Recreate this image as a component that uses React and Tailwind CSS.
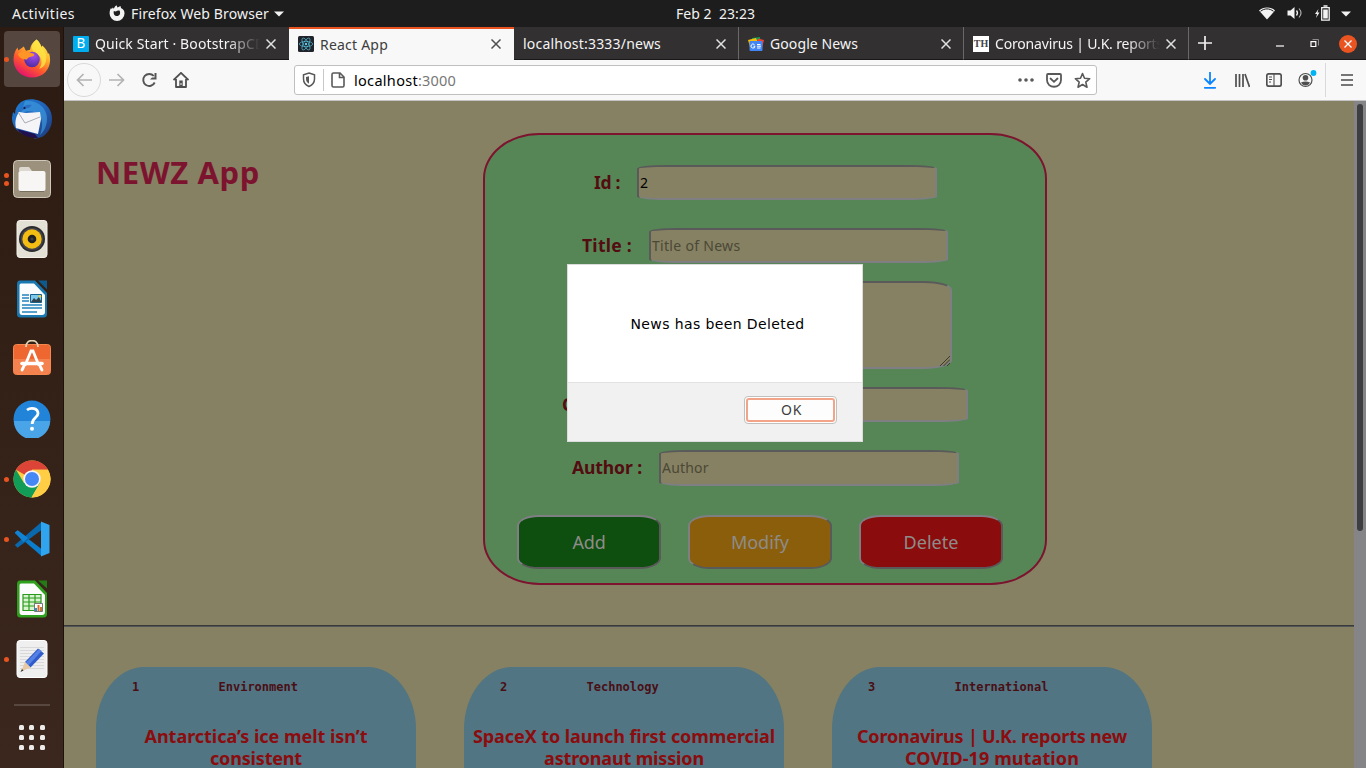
import { useLayoutEffect, useRef, useState } from "react";

/* Spreads a run of text over a fixed measure by adjusting its tracking. */
function Fit({ w, children, className = "" }) {
  const ref = useRef(null);
  const [tracking, setTracking] = useState(0);
  useLayoutEffect(() => {
    const natural = ref.current.getBoundingClientRect().width;
    setTracking((w - natural) / children.length);
  }, []);
  return (
    <span ref={ref} className={`inline-block whitespace-pre ${className}`} style={{ letterSpacing: `${tracking}px` }}>
      {children}
    </span>
  );
}

/* ---------- Dock icons ---------- */

const FirefoxIcon = () => (
  <svg width="40" height="40" viewBox="0 0 40 40">
    <defs>
      <linearGradient id="ffBody" x1="0.85" y1="0.05" x2="0.3" y2="1">
        <stop offset="0" stopColor="#fff44f" />
        <stop offset="0.35" stopColor="#ffb22e" />
        <stop offset="0.65" stopColor="#ff5a2c" />
        <stop offset="1" stopColor="#e4106f" />
      </linearGradient>
      <radialGradient id="ffGlobe" cx="0.6" cy="0.25" r="0.8">
        <stop offset="0" stopColor="#a24df0" />
        <stop offset="1" stopColor="#4b2a9c" />
      </radialGradient>
    </defs>
    <path d="M24.500 .500c2.500 2 4 4.500 4.800 7.500l1-1.500c3 2.500 5 5 5.700 8.500l1-1C41 26 34 38.500 20 38.500 9 38.500 1.500 30.500 1.500 20.500c0-4.500 1.500-9 4-12l.8 3 2-1.500 3.500-2.500 2.200 4.500c1.200-.8 2.500-1.200 4-1.300C18.500 6 21 3 24.500.5Z" fill="url(#ffBody)" />
    <path d="M24.500.5c2.500 2 4 4.500 4.800 7.500C33 12 35 16 34 22c-1 5-4 7-7 8 4-5 3-11-1-14.500-4-3-7-4.500-6-8C20.500 5 22.500 2 24.500.5Z" fill="#ffe645" opacity=".8" />
    <circle cx="20" cy="20.500" r="7.800" fill="url(#ffGlobe)" />
    <path d="M6 15c3-3 6-3.500 9-3 2 .3 3 2 6 2.500 2 .5 1.500 2.500-1 3-3 .5-4 1-5 3-3 0-8-1-9-5.500Z" fill="#ff9427" />
  </svg>
);

const ThunderbirdIcon = () => (
  <svg width="42" height="42" viewBox="0 0 42 42">
    <defs>
      <linearGradient id="tbBody" x1="0" y1="0" x2="1" y2="1">
        <stop offset="0" stopColor="#1f7fd3" />
        <stop offset="0.5" stopColor="#2162b8" />
        <stop offset="1" stopColor="#1d3777" />
      </linearGradient>
    </defs>
    <path d="M10 4C14 1 22 0 29 3c7 3 12 9 12 18 0 9-5 15-10 18l-8 2 2-3-13-2C5 33 1 27 1 20l1-6 2 2C4 11 6 7 10 4Z" fill="url(#tbBody)" />
    <path d="M14 3c8-1 18 3 21 12 3 8-1 18-6 22 3-8 3-16-1-20-4-4-11-5-18-2Z" fill="#3f9be0" opacity=".65" />
    <path d="m8 14 7 1 14-1 1 7-3 15-22-6C4 25 4 20 8 14Z" fill="#f5f5f7" />
    <path d="m7 14 7 11 15-6" stroke="#a9acb3" fill="none" />
    <path d="M10 11c3-4 7-5 11-4l-3 3c-3 0-5 2-10 4Z" fill="#2b6ec4" />
    <path d="m6 31 18 5 3 4c-8 0-16-2-21-9Z" fill="#211050" />
    <circle cx="13.500" cy="10" r="1.100" fill="#0f1c40" />
  </svg>
);

const FilesIcon = () => (
  <svg width="38" height="38" viewBox="0 0 38 38">
    <rect x=".5" y=".5" width="37" height="37" rx="4" fill="#9c917d" stroke="#cfc8ba" />
    <path d="M6 9q0-2 2-2h8l3 4H6Z" fill="#dcd8cf" />
    <rect x="5.500" y="11" width="27" height="20" rx="2" fill="#f7f6f4" />
    <path d="M7 31.500h24" stroke="#786e5e" />
  </svg>
);

const RhythmboxIcon = () => (
  <svg width="32" height="38" viewBox="0 0 32 38">
    <rect x="1" y=".5" width="30" height="37" rx="3" fill="#e3e0d6" stroke="#f3f1e9" />
    <circle cx="16" cy="19" r="13" fill="#2b2b2e" />
    <circle cx="16" cy="19" r="11.300" fill="#44444a" />
    <circle cx="16" cy="19" r="9.700" fill="#f3bd13" />
    <circle cx="16" cy="19" r="4.300" fill="#202023" />
    <circle cx="16" cy="19" r="1.600" fill="#3c3c45" />
  </svg>
);

const WriterIcon = () => (
  <svg width="32" height="38" viewBox="0 0 32 38">
    <path d="M4 .5h15L31 13v21q0 3.500-3.500 3.500h-23Q1 37.500 1 34V4Q1 .5 4 .5Z" fill="#1a78b0" />
    <path d="M22 .5h9v9Z" fill="#0d5a8c" />
    <path d="M5 3.500h13L29 15v17q0 3-3 3H6q-2.500 0-2.500-3V5.500q0-2 1.500-2Z" fill="#fbfcfd" />
    <path d="M6 15h7M6 18h7M6 21h7M6 25h20M6 28h20M6 32h15" stroke="#2383bd" strokeWidth="1.500" />
    <path d="M14.500 14.500h11v8h-11z" fill="#7ecaec" stroke="#18618e" />
    <path d="m15 22 3-4 2 2 3-3 2.500 5Z" fill="#31424c" />
    <circle cx="24" cy="16.300" r="1.200" fill="#f6d12b" />
  </svg>
);

const SoftwareIcon = () => (
  <svg width="38" height="38" viewBox="0 0 38 38">
    <rect x=".5" y="4.500" width="37" height="30" rx="3" fill="#ee6630" stroke="#f5874f" />
    <path d="M1 19h36v13q0 2-2 2H3q-2 0-2-2Z" fill="#f4824e" />
    <path d="M13 7C13-1.500 25-1.500 25 7" fill="none" stroke="#e6d5b4" strokeWidth="1.800" />
    <path d="m12.500 24.500 5.500-13.500h2l5.500 13.500M11 26l-2 4M27 26l2 4" stroke="#fff" strokeWidth="2.800" fill="none" strokeLinecap="round" />
    <path d="M9 23.500h20" stroke="#fff" strokeWidth="3.600" strokeLinecap="round" />
  </svg>
);

const HelpIcon = () => (
  <svg width="38" height="38" viewBox="0 0 38 38">
    <circle cx="19" cy="19" r="18.500" fill="#2184d8" />
    <path d="M1 21h36A18 18 0 0 1 1 21Z" fill="#4aa5e8" />
    <path d="M14 10c4-3 11-2 11 3.500 0 4-5.800 4.500-5.800 10.500" stroke="#fff" strokeWidth="2.800" fill="none" />
    <circle cx="19" cy="28.800" r="2" fill="#fff" />
  </svg>
);

const ChromeIcon = () => (
  <svg width="38" height="38" viewBox="0 0 38 38">
    <circle cx="19" cy="19" r="18.500" fill="#ffce44" />
    <path d="M19 19 3 9.700A18.500 18.500 0 0 1 35 9.700H19Z" fill="#dc4437" />
    <path d="M3 9.700A18.500 18.500 0 0 0 18.500 37.500L27 23 19 19 11 23Z" fill="#119d58" />
    <path d="M19 9.700h16A18.500 18.500 0 0 1 18.500 37.500L27.500 22Z" fill="#ffce44" />
    <circle cx="19" cy="19" r="8.700" fill="#f5f5f5" />
    <circle cx="19" cy="19" r="7" fill="#4587f4" />
  </svg>
);

const CodeIcon = () => (
  <svg width="36" height="36" viewBox="0 0 36 36">
    <path d="m3.500 9.500 24 18.500v7L.8 12Z" fill="#0a7dcc" />
    <path d="m.8 24 26.700-23v8L3.500 26.800Z" fill="#0a68ad" />
    <path d="m.8 11.500 3-2.300L14 17l-4.500 4Z" fill="#1183d2" />
    <path d="M27 .5 35.500 4v28L27 35.500Z" fill="#30a4ee" />
  </svg>
);

const CalcIcon = () => (
  <svg width="32" height="38" viewBox="0 0 32 38">
    <path d="M4 .5h15L31 13v21q0 3.500-3.500 3.500h-23Q1 37.500 1 34V4Q1 .5 4 .5Z" fill="#2ea01d" />
    <path d="M22 .5h9v8Z" fill="#237a16" />
    <path d="M5 3.500h13L29 15v17q0 3-3 3H6q-2.500 0-2.500-3V5.500q0-2 1.500-2Z" fill="#fbfcfb" />
    <path d="M7 14h18v17H7z" fill="#d6f4cf" />
    <path d="M7 14.500h18v16H7zM7 18h18M7 22h18M7 26h18M13 14v16M19 14v16" stroke="#2a9a1b" fill="none" strokeWidth="1.200" />
    <path d="M18.500 23.500h8v8h-8z" fill="#fff" stroke="#777" />
    <path d="M19 28h2v3h-2z" fill="#2491d6" />
    <path d="M21.500 25h2v6h-2z" fill="#e46724" />
    <path d="M24 27h2v4h-2z" fill="#be7d34" />
  </svg>
);

const EditorIcon = () => (
  <svg width="32" height="38" viewBox="0 0 32 38">
    <rect x="1" y=".5" width="30" height="37" rx="3" fill="#efefef" stroke="#fff" />
    <path d="M4 7.500h24M4 10.500h24M4 13.500h24M4 16.500h24M4 19.500h24M4 22.500h24M4 25.500h24M4 28.500h24" stroke="#d9d9d9" />
    <path d="m9 22 13-13.500 6 5L14.500 27.500Z" fill="#2f5ccc" />
    <path d="m10 22.500 13-13.500 2.500 2-13 14.500Z" fill="#5580e4" />
    <path d="m9 22 5.500 5.500-9.500 4Z" fill="#e8c9a4" />
    <path d="m6 29 1.500 1.500L4.500 32Z" fill="#333" />
  </svg>
);

const dockItems = [
  { Icon: FirefoxIcon, dots: 1, active: true },
  { Icon: ThunderbirdIcon, dots: 0 },
  { Icon: FilesIcon, dots: 2 },
  { Icon: RhythmboxIcon, dots: 0 },
  { Icon: WriterIcon, dots: 0 },
  { Icon: SoftwareIcon, dots: 0 },
  { Icon: HelpIcon, dots: 0 },
  { Icon: ChromeIcon, dots: 1 },
  { Icon: CodeIcon, dots: 1 },
  { Icon: CalcIcon, dots: 0 },
  { Icon: EditorIcon, dots: 1 },
];

function Dock() {
  return (
    <nav className="flex w-16 shrink-0 flex-col border-r border-[#1d130e] bg-linear-to-b from-[#2c1b12] to-[#3b271d] pt-0.5">
      {dockItems.map(({ Icon, dots, active }, i) => (
        <div key={i} className="relative flex h-[60px] items-center pl-1">
          <div className={active ? "flex h-14 w-14 items-center justify-center rounded bg-[#554640]" : "flex h-14 w-14 items-center justify-center"}>
            <Icon />
          </div>
          <div className="absolute left-1 flex flex-col gap-[3px]">
            {Array.from({ length: dots }, (_, d) => (
              <i key={d} className="h-[5px] w-[5px] rounded-full bg-[#e95420]" />
            ))}
          </div>
        </div>
      ))}
      <div className="mx-auto mt-[15px] h-0.5 w-9 bg-[#57473e]" />
      <div className="mt-[19px] ml-[19px] grid w-[26px] grid-cols-3 gap-[5px]">
        {Array.from({ length: 9 }, (_, i) => (
          <i key={i} className="h-[5px] w-[5px] rounded-[1.500px] bg-[#eeecea]" />
        ))}
      </div>
    </nav>
  );
}

/* ---------- System bar ---------- */

function TopBar() {
  return (
    <header className="flex h-[27px] shrink-0 items-center bg-[#1d1d1d] text-[14px] text-[#f2f2f2]">
      <div className="flex w-[676px] items-center pl-3">
        <Fit w={63}>Activities</Fit>
        <svg className="-mt-px ml-[34px]" width="16" height="16" viewBox="0 0 16 16">
          <path d="M7.500.3 8.500 2.500l3-1.500.5 2c3 1.500 3.500 3.500 3.500 5.500A7.400 7.400 0 0 1 .6 8.500c0-2 .4-4 1.400-5.500l.8 1 1-1.500 1 1.200C5.500 2.500 6 1 7.500.3ZM10.500 5.500c-2 0-3 .5-4 1L4.800 6c-.6 3 .8 5 3.200 5 2.500 0 4-2.500 2.500-5.500Z" fill="#f2f2f2" fillRule="evenodd" />
        </svg>
        <Fit w={138} className="ml-1.5">Firefox Web Browser</Fit>
        <svg className="ml-[5px]" width="10" height="6" viewBox="0 0 10 6"><path d="M0 .5h10L5 5.500Z" fill="#f2f2f2" /></svg>
      </div>
      <Fit w={79} className="-mt-px">{"Feb 2  23:23"}</Fit>
      <div className="ml-auto flex items-center pr-[15px]">
        <svg width="16" height="13" viewBox="0 0 16 13">
          <path d="M0 3.500C4-.5 12-.5 16 3.500L8 12.500Z" fill="#f2f2f2" />
          <path d="M1.500 4.300c4-3.200 9-3.200 13 0" stroke="#1d1d1d" fill="none" />
        </svg>
        <svg className="ml-3 -mt-px" width="16" height="14" viewBox="0 0 16 14">
          <path d="M.5 4.500h3L7.500 1v12L3.500 9.500h-3Z" fill="#f2f2f2" />
          <path d="M9.500 4.500q2 2.500 0 5" stroke="#f2f2f2" strokeWidth="1.300" fill="none" />
          <path d="M12 2.500q4 4.500 0 9" stroke="#b5b5b5" strokeWidth="1.100" fill="none" />
        </svg>
        <svg className="-mt-0.5 ml-3" width="15" height="16" viewBox="0 0 15 16">
          <path d="M3.500 4 0 9h2l-1 4 3.500-5.500h-2Z" fill="#f2f2f2" />
          <path d="M6.700 2.700h7.500v12.500H6.700ZM8.500 1h4" fill="none" stroke="#f2f2f2" strokeWidth="1.300" />
          <path d="M8.200 4.500h4.600v9H8.200z" fill="#f2f2f2" />
        </svg>
        <svg className="ml-[11px]" width="10" height="6" viewBox="0 0 10 6"><path d="M0 .5h10L5 5.500Z" fill="#f2f2f2" /></svg>
      </div>
    </header>
  );
}

/* ---------- Browser chrome ---------- */

const Close = ({ color }) => (
  <svg className="shrink-0" width="10" height="10" viewBox="0 0 10 10">
    <path d="m.5.5 9 9m0-9-9 9" stroke={color} strokeWidth="1.500" />
  </svg>
);

const ReactFavicon = () => (
  <svg width="16" height="16" viewBox="0 0 16 16">
    <rect width="16" height="16" rx="1.500" fill="#20232a" />
    <g fill="none" stroke="#5ccfee" strokeWidth=".6">
      <ellipse cx="8" cy="8" rx="6.700" ry="2.600" />
      <ellipse cx="8" cy="8" rx="6.700" ry="2.600" transform="rotate(60 8 8)" />
      <ellipse cx="8" cy="8" rx="6.700" ry="2.600" transform="rotate(120 8 8)" />
    </g>
    <circle cx="8" cy="8" r="1.200" fill="#5ccfee" />
  </svg>
);

const NewsFavicon = () => (
  <svg width="16" height="16" viewBox="0 0 16 16">
    <path d="m4 2 8-1 .5 5H4Z" fill="#0e9d58" />
    <path d="m0 4 8-2 2 5-8 4Z" fill="#fbbc04" />
    <path d="m16 4-6-1.500L8 8l6 4Z" fill="#ea4335" />
    <rect x="1.500" y="5" width="13" height="10" rx="1" fill="#4285f4" />
    <path d="M6.500 8.700a2 2 0 1 0 .5 1.500H5.500M9 8.500h3.500M9 10.200h4M9 12h3.500" stroke="#fff" fill="none" />
  </svg>
);

function Tab({ icon, children, w, active, fade, last }) {
  return (
    <div
      className={
        active
          ? "flex h-[33px] w-[225px] items-center border-t-2 border-[#e95420] bg-[#f8f8f8] pr-[13px] pb-px pl-[9px] text-[#3d3d3d]"
          : `flex h-[33px] w-[225px] items-center border-b border-b-[#191919] bg-[#333031] pt-px pl-[9px] text-[#f4f4f4] ${last ? "border-r border-r-[#6a6869] pr-3" : "pr-[13px]"}`
      }
    >
      {icon && <span className="mr-1.5 flex h-4 w-4 shrink-0">{icon}</span>}
      <span className={`min-w-0 flex-1 overflow-hidden ${fade ? "mask-[linear-gradient(to_right,black_80%,transparent)]" : ""}`}>
        <Fit w={w}>{children}</Fit>
      </span>
      <span className="ml-1.5 flex">
        <Close color={active ? "#4d4d4d" : "#e0e0e0"} />
      </span>
    </div>
  );
}

function TabStrip() {
  return (
    <div className="flex h-[33px] shrink-0 bg-[#333031] text-[14px]">
      <Tab w={181} fade icon={<span className="flex h-4 w-4 items-center justify-center rounded-[1px] bg-[#00adef] text-[13.500px] text-white">B</span>}>
        Quick Start · BootstrapCDN
      </Tab>
      <Tab w={68} active icon={<ReactFavicon />}>React App</Tab>
      <Tab w={138} last>localhost:3333/news</Tab>
      <Tab w={88} last icon={<NewsFavicon />}>Google News</Tab>
      <Tab w={168} fade last icon={<span className="flex h-4 w-4 items-center justify-center bg-white font-['Liberation_Serif',serif] text-[10px] font-bold text-[#444]">TH</span>}>
        Coronavirus | U.K. reports
      </Tab>
      <div className="flex flex-1 items-center border-b border-[#191919] pl-[9px]">
        <svg width="14" height="14" viewBox="0 0 14 14"><path d="M7 0v14M0 7h14" stroke="#f0f0f0" strokeWidth="1.700" /></svg>
        <svg className="ml-16" width="8" height="8" viewBox="0 0 8 8"><path d="M0 7h8" stroke="#fff" strokeWidth="1.200" /></svg>
        <svg className="ml-[26px]" width="9" height="9" viewBox="0 0 9 9">
          <path d="M2.500.5h6v6" fill="none" stroke="#8f8d8e" />
          <path d="M1 2.700h4.800v4.800H1z" fill="none" stroke="#fff" strokeWidth="1.200" />
        </svg>
        <span className="mt-px ml-[20px] flex h-[18px] w-[18px] items-center justify-center rounded-full bg-[#e95420]">
          <svg width="8" height="8" viewBox="0 0 8 8"><path d="m.5.500 7 7m0-7-7 7" stroke="#fff" strokeWidth="1.300" /></svg>
        </span>
      </div>
    </div>
  );
}

function Toolbar() {
  return (
    <div className="flex h-[41px] shrink-0 items-center border-b border-[#c4c4c6] bg-[#f8f8f8] pl-[3px]">
      <span className="flex h-[34px] w-[34px] items-center justify-center rounded-full border border-[#d9d9d9]">
        <svg width="16" height="14" viewBox="0 0 16 14"><path d="M16 7H1.500M7.500 1l-6 6 6 6" fill="none" stroke="#b3b3b3" strokeWidth="1.700" /></svg>
      </span>
      <svg className="ml-2" width="16" height="14" viewBox="0 0 16 14"><path d="M0 7h14.500M8.500 1l6 6-6 6" fill="none" stroke="#b3b3b3" strokeWidth="1.700" /></svg>
      <svg className="ml-4" width="16" height="16" viewBox="0 0 16 16">
        <path d="M13.700 10.500A6 6 0 1 1 12.800 4" fill="none" stroke="#555" strokeWidth="1.900" />
        <path d="M15.500 1v6.500H9L11 5.500h2.500V1Z" fill="#555" />
      </svg>
      <svg className="ml-4" width="16" height="16" viewBox="0 0 16 16">
        <path d="m.5 8 7.500-7.200L15.500 8M3 7v8h10V7" fill="none" stroke="#4f4f4f" strokeWidth="1.800" strokeLinejoin="round" />
        <path d="M6.300 8.500h3.400V15H6.300z" fill="#4f4f4f" /><path d="M8 11v2" stroke="#f8f8f8" />
      </svg>
      <div className="ml-[105px] flex h-[30px] w-[803px] items-center rounded-[3px] border border-[#c0c0c0] bg-white pl-[7px]">
        <svg width="14" height="16" viewBox="0 0 14 16">
          <path d="M7 1 12.500 2.800v4.200c0 4-2.800 6.300-5.500 7.500C4.300 13.300 1.500 11 1.500 7V2.800Z" fill="none" stroke="#595959" strokeWidth="1.500" />
          <path d="M7 4.200v7.500C5 10.500 4 9 4 7V5Z" fill="#595959" />
        </svg>
        <i className="ml-[7px] h-[22px] w-px bg-[#c9c9c9]" />
        <svg className="ml-[7px]" width="14" height="16" viewBox="0 0 14 16">
          <path d="M3 1h6l4 4v8.500q0 1.500-1.500 1.500h-9Q1 15 1 13.500V2.500Q1 1 2.500 1ZM8.500 1v4.500H13" fill="none" stroke="#595959" strokeWidth="1.600" />
        </svg>
        <p className="mt-px ml-[9px] flex text-[14.500px] text-black">
          <Fit w={64}>localhost</Fit>
          <Fit w={38} className="text-[#777]">:3000</Fit>
        </p>
        <svg className="ml-auto" width="16" height="4" viewBox="0 0 16 4"><path d="M2 2h.01M8 2h.01M14 2h.01" stroke="#595959" strokeWidth="3.600" strokeLinecap="round" /></svg>
        <svg className="ml-3" width="16" height="15" viewBox="0 0 16 15">
          <path d="M1 2q0-1 1-1h12q1 0 1 1v5c0 9-14 9-14 0Z" fill="none" stroke="#595959" strokeWidth="1.800" />
          <path d="m4.500 5.500 3.500 3.300 3.500-3.300" fill="none" stroke="#595959" strokeWidth="1.800" strokeLinecap="round" />
        </svg>
        <svg className="mr-[5px] ml-3" width="17" height="17" viewBox="0 0 17 17">
          <path d="m8.500 1.500 2 4.700 5.200.5-3.900 3.400 1.200 5.100-4.500-2.700L4 15.200l1.200-5.100-3.900-3.400 5.200-.5Z" fill="none" stroke="#595959" strokeWidth="1.600" strokeLinejoin="round" />
        </svg>
      </div>
      <svg className="ml-[107px]" width="12" height="17" viewBox="0 0 12 17">
        <path d="M6 .5v11M1 7l5 5 5-5M.8 15.800h10.400" fill="none" stroke="#0a84ff" strokeWidth="1.800" strokeLinecap="round" />
      </svg>
      <svg className="ml-[19px]" width="15" height="15" viewBox="0 0 15 15">
        <path d="M1 1v13M4.500 1v13M8 1v13M10 1l4.500 13" stroke="#4f4f4f" strokeWidth="1.700" />
      </svg>
      <svg className="ml-4" width="16" height="14" viewBox="0 0 16 14">
        <rect x=".8" y=".8" width="14.400" height="12.400" rx="2" fill="none" stroke="#4f4f4f" strokeWidth="1.700" />
        <path d="M8 1v12M3 4h3M3 6.500h3M3 9h2" stroke="#4f4f4f" strokeWidth="1.100" />
      </svg>
      <svg className="-mt-0.5 ml-4" width="20" height="20" viewBox="0 0 20 20">
        <circle cx="7.500" cy="11" r="6.500" fill="none" stroke="#4f4f4f" strokeWidth="1.200" />
        <circle cx="7.500" cy="8.800" r="2.800" fill="#4f4f4f" />
        <path d="M3 13.500q4.500-2 9 0-1.500 3-4.500 3T3 13.500Z" fill="#4f4f4f" />
        <circle cx="15.500" cy="4" r="2.900" fill="#00b3f4" />
      </svg>
      <i className="ml-[7px] h-[34px] w-px bg-[#dadada]" />
      <svg className="ml-[15px]" width="12" height="12" viewBox="0 0 12 12"><path d="M0 1h12M0 6h12M0 11h12" stroke="#4a4a4a" strokeWidth="1.700" /></svg>
    </div>
  );
}

/* ---------- Page ---------- */

const field =
  "block border-2 border-t-[#5a5a5a] border-r-[#7f7f83] border-b-[#7f7f83] border-l-[#5a5a5a] bg-[#868162] rounded-[10%] px-px text-[14px] leading-[20px] text-black placeholder:text-[#4a4836] outline-none";

const button =
  "h-[54px] w-36 rounded-[15%/20%] border-2 border-t-[#7f7f83] border-r-[#5a5a5a] border-b-[#5a5a5a] border-l-[#7f7f83]";

function Row({ className, labelClass, label, w, children }) {
  return (
    <div className={`flex items-center justify-center ${className}`}>
      <label className={`${labelClass} -mt-0.5 shrink-0 text-[17.500px] leading-6 font-bold text-[#530c10]`}>
        <Fit w={w}>{label}</Fit>
      </label>
      {children}
    </div>
  );
}

function NewsForm() {
  return (
    <form className="flex h-[452px] w-[564px] flex-col rounded-[10%] border-2 border-[#7d142f] bg-[#568656] pt-[30px]">
      <Row className="h-[35px] pl-px" labelClass="w-[43px]" w={26} label="Id :">
        <input className={`${field} h-[35px] w-[300px]`} defaultValue="2" />
      </Row>
      <Row className="mt-7 h-[35px]" labelClass="w-[67px]" w={50} label="Title :">
        <input className={`${field} h-[35px] w-[299px] tracking-[0.3px]`} placeholder="Title of News" />
      </Row>
      <Row className="mt-[18px] h-[88px] pl-px" labelClass="w-[94px]" w={77} label="Content :">
        <div className="relative">
          <textarea className={`${field} h-[88px] w-[279px] resize-none`} />
          <svg className="absolute right-0.5 bottom-[3px]" width="10" height="10" viewBox="0 0 10 10">
            <path d="M0 10 10 0M3.500 10 10 3.500M7 10l3-3" stroke="#3b3a2c" />
          </svg>
        </div>
      </Row>
      <Row className="mt-[18px] h-[35px]" labelClass="w-[106px]" w={88} label="Category :">
        <input className={`${field} h-[35px] w-[300px]`} />
      </Row>
      <Row className="mt-7 h-[36px] pl-px" labelClass="w-[87px]" w={70} label="Author :">
        <input className={`${field} h-[36px] w-[300px] pb-0.5 tracking-[0.2px]`} placeholder="Author" />
      </Row>
      <div className="mt-[29px] flex gap-[27px] pl-[32px] text-[18px] text-[#8e8c8a]">
        <button type="button" className={`${button} bg-[#0e4e0e]`}><Fit w={33}>Add</Fit></button>
        <button type="button" className={`${button} bg-[#8b5e0c]`}><Fit w={58}>Modify</Fit></button>
        <button type="button" className={`${button} bg-[#8b0c0d]`}><Fit w={55}>Delete</Fit></button>
      </div>
    </form>
  );
}

const articles = [
  { id: "1", category: "Environment", lines: [["Antarctica’s ice melt isn’t", 223], ["consistent", 92]] },
  { id: "2", category: "Technology", lines: [["SpaceX to launch first commercial", 302], ["astronaut mission", 160]] },
  { id: "3", category: "International", lines: [["Coronavirus | U.K. reports new", 270], ["COVID-19 mutation", 174]] },
];

function ArticleCard({ id, category, lines }) {
  return (
    <article className="h-[420px] w-80 shrink-0 rounded-[48px/62px] bg-[#517582]">
      <div className="flex pt-3 font-['DejaVu_Sans_Mono',monospace] text-[12px] leading-4 font-bold text-[#4a0f16]">
        <span className="w-[122.500px] pl-9">{id}</span>
        <span>{category}</span>
      </div>
      <h2 className="mt-[30px] flex flex-col items-center text-[18px] leading-[22px] font-bold text-[#8b0c0e]">
        {lines.map(([text, w]) => (
          <Fit key={text} w={w}>{text}</Fit>
        ))}
      </h2>
    </article>
  );
}

function AlertDialog() {
  return (
    <div role="alertdialog" className="absolute top-[163px] left-[503px] flex h-[178px] w-[296px] flex-col border border-[#dcdcdc] bg-white">
      <p className="flex flex-1 items-center justify-center pt-px pl-[5px] font-['DejaVu_Sans',sans-serif] text-[14px] text-black">
        <Fit w={174}>News has been Deleted</Fit>
      </p>
      <div className="flex h-[59px] justify-end border-t border-[#e2e2e2] bg-[#f1f1f1] pt-[13px] pr-[25px]">
        <button type="button" className="h-[28px] w-[93px] rounded border border-[#c2c0be] bg-white p-px">
          <span className="flex h-full items-center justify-center rounded-[3px] border-2 border-[#f2a488] bg-[#fdfdfd] pb-px pl-0.5 text-[14px] text-[#3d3d3d]">
            <Fit w={21}>OK</Fit>
          </span>
        </button>
      </div>
    </div>
  );
}

export default function App() {
  return (
    <div className="flex h-[768px] w-[1366px] flex-col overflow-hidden font-['Noto_Sans','Open_Sans',sans-serif]">
      <TopBar />
      <div className="flex min-h-0 flex-1">
        <Dock />
        <div className="flex min-w-0 flex-1 flex-col">
          <TabStrip />
          <Toolbar />
          <div className="relative flex min-h-0 flex-1">
            <main className="min-w-0 flex-1 overflow-hidden bg-[#868162]">
              <section className="flex h-[524px] items-start pt-8 pl-8">
                <h1 className="w-[387px] pt-[17px] text-[31px] leading-[44px] font-bold text-[#7d142f]">
                  <Fit w={164}>NEWZ App</Fit>
                </h1>
                <NewsForm />
              </section>
              <hr className="h-0.5 border-t border-b border-t-[#3a3b38] border-b-[#51555a]" />
              <section className="flex gap-12 pt-10 pl-8">
                {articles.map((a) => (
                  <ArticleCard key={a.id} {...a} />
                ))}
              </section>
            </main>
            <div className="w-3 shrink-0 bg-[#858588] pt-[3px] pl-[3px]">
              <div className="h-[427px] w-1.5 rounded-full bg-[#3e3e40]" />
            </div>
            <AlertDialog />
          </div>
        </div>
      </div>
    </div>
  );
}
